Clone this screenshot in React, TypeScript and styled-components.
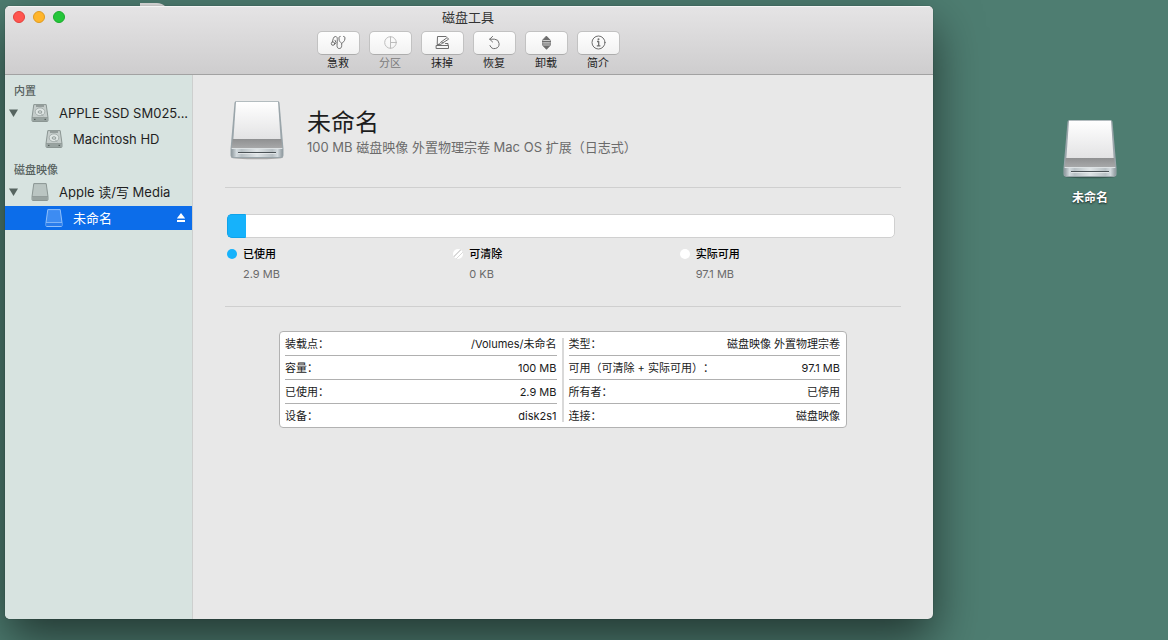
import React from "react";
import styled, { createGlobalStyle, css } from "styled-components";

const GlobalStyle = createGlobalStyle`
  *, *::before, *::after { box-sizing: border-box; }
  body {
    margin: 0;
    font-family: Inter, "Noto Sans CJK SC", sans-serif;
    font-size: 13px;
    color: #1f1f1f;
    background: #4e7d71;
  }
  button {
    margin: 0;
    padding: 0;
    border: 0;
    background: none;
    font: inherit;
    color: inherit;
  }
  svg { display: block; flex: none; }
  h1, h2, p, ul, dl, dd { margin: 0; padding: 0; }
  ul { list-style: none; }
`;

const Desktop = styled.div`
  position: relative;
  display: grid;
  grid-template-columns: minmax(0, 1fr) 235px;
  min-height: 100vh;
  padding: 6px 0 21px 5px;
  background: #4e7d71;
  overflow: hidden;
`;

const BackgroundPaper = styled.div`
  position: absolute;
  top: 3px;
  left: 140px;
  width: 29px;
  height: 12px;
  border-radius: 0 12px 0 0;
  background: #e3e3e3;
`;

const Window = styled.div`
  position: relative;
  display: flex;
  flex-direction: column;
  border-radius: 5px;
  background: #e8e8e8;
  box-shadow: 0 0 1px rgba(0, 0, 0, 0.6), 0 20px 48px rgba(0, 0, 0, 0.56);
  overflow: hidden;
`;

const TitleBar = styled.header`
  display: flex;
  flex-direction: column;
  height: 69px;
  border-top: 1px solid #f4f4f4;
  border-bottom: 1px solid #a2a2a2;
  background: linear-gradient(#e5e4e5, #cecdce);
`;

const TitleRow = styled.div`
  display: grid;
  grid-template-columns: 1fr auto 1fr;
  align-items: center;
  height: 20px;
  padding: 0 10px 0 8px;
`;

const TrafficLights = styled.div`
  display: flex;
  gap: 8px;
`;

const TrafficLight = styled.button<{ $fill: string; $edge: string }>`
  width: 12px;
  height: 12px;
  border: 1px solid ${(p) => p.$edge};
  border-radius: 50%;
  background: ${(p) => p.$fill};
`;

const WindowTitle = styled.h1`
  font-size: 13px;
  font-weight: 400;
  line-height: 18px;
  color: #333;
`;

const Toolbar = styled.div`
  display: flex;
  justify-content: center;
  gap: 9px;
  padding: 4px 2px 0 0;
`;

const ToolItem = styled.button`
  display: flex;
  flex-direction: column;
  align-items: center;
  width: 43px;
  font-size: 11px;
  line-height: 16px;
  color: #222;

  &:disabled { color: #7b7b7b; }
`;

const ToolFace = styled.span<{ $dim?: boolean }>`
  display: grid;
  place-items: center;
  width: 43px;
  height: 24px;
  border: 1px solid #c2c2c2;
  border-bottom-color: #adadad;
  border-radius: 5px;
  background: linear-gradient(#fefefe, #f2f2f2);
  color: ${(p) => (p.$dim ? "#bdbdbd" : "#6e6e6e")};
`;

const WindowBody = styled.div`
  display: grid;
  flex: 1;
  grid-template-columns: 188px minmax(0, 1fr);
`;

const Sidebar = styled.nav`
  display: flex;
  flex-direction: column;
  gap: 10px;
  padding-top: 7px;
  border-right: 1px solid #cdcfce;
  background: #d7e3e0;
`;

const DeviceGroup = styled.section`
  display: grid;
  gap: 1px;
`;

const GroupTitle = styled.h2`
  padding-left: 9px;
  font-size: 11px;
  font-weight: 500;
  line-height: 18px;
  color: #56615e;
`;

const DeviceList = styled.ul`
  display: grid;
  gap: 2px;
`;

const DeviceRow = styled.li<{ $selected?: boolean }>`
  display: flex;
  align-items: center;
  height: 24px;
  padding-right: 6px;
  ${(p) =>
    p.$selected &&
    css`
      background: #0c6dea;
      color: #fff;
    `}
`;

const Disclosure = styled.button`
  display: grid;
  place-items: center;
  width: 17px;
  height: 24px;
`;

const DeviceButton = styled.button<{ $level: number }>`
  display: flex;
  flex: 1;
  align-items: center;
  gap: 10px;
  min-width: 0;
  height: 24px;
  padding-left: ${(p) => (p.$level === 0 ? 9 : 40)}px;
  line-height: 24px;
  text-align: left;
`;

const DeviceName = styled.span`
  white-space: nowrap;
`;

const Main = styled.main`
  padding: 0 32px 32px;
`;

const VolumeHeader = styled.section`
  display: flex;
  align-items: center;
  gap: 23px;
  padding: 25px 5px 27px;
  border-bottom: 1px solid #cfcfcf;
`;

const VolumeText = styled.div`
  padding-top: 3px;
`;

const VolumeTitle = styled.h2`
  font-size: 24px;
  font-weight: 400;
  line-height: 30px;
  color: #1d1d1d;
`;

const VolumeSubtitle = styled.p`
  font-size: 13px;
  line-height: 18px;
  color: #6b6b6b;
`;

const UsageSection = styled.section`
  padding: 26px 0 24px 2px;
  border-bottom: 1px solid #cfcfcf;
`;

const UsageBar = styled.div`
  height: 24px;
  margin-right: 6px;
  border: 1px solid #d0d0d0;
  border-radius: 5px;
  background: #fff;
`;

const UsageFill = styled.div`
  height: 24px;
  margin: -1px 0 0 -1px;
  border: 1px solid #0fa3ea;
  border-right-color: #16b2fb;
  border-radius: 5px 0 0 5px;
  background: #16b2fb;
`;

const Legend = styled.dl`
  display: grid;
  grid-template-columns: repeat(3, 1fr);
  gap: 5px;
  padding-top: 8px;
  font-size: 11px;
  line-height: 16px;
`;

const LegendEntry = styled.div`
  display: grid;
  row-gap: 4px;
`;

const LegendName = styled.dt`
  display: flex;
  align-items: center;
  gap: 6px;
  font-weight: 500;
  color: #000;
`;

const LegendValue = styled.dd`
  padding-left: 16px;
  color: #6b6b6b;
`;

const Dot = styled.span<{ $kind: "used" | "purgeable" | "free" }>`
  width: 10px;
  height: 10px;
  border-radius: 50%;
  background: ${(p) =>
    p.$kind === "used"
      ? "#16b2fb"
      : p.$kind === "free"
      ? "#fff"
      : "linear-gradient(135deg, #fff 38%, #d9d9d9 38% 46%, #fff 46% 62%, #d9d9d9 62% 70%, #fff 70%)"};
`;

const InfoPanel = styled.section`
  display: grid;
  grid-template-columns: 1fr 2px 1fr;
  gap: 5px;
  max-width: 568px;
  margin: 24px auto 0;
  padding: 0 6px 0 5px;
  border: 1px solid #b2b2b2;
  border-radius: 4px;
  background: #fff;
`;

const PanelDivider = styled.div`
  margin: 6px 0 5px;
  background: #d9d9d9;
`;

const InfoTable = styled.table`
  width: 100%;
  border-collapse: collapse;
  font-size: 11px;
  line-height: 16px;
  color: #1a1a1a;
  text-spacing-trim: space-all;

  tr + tr { border-top: 1px solid #b0b0b0; }
  th { padding: 4px 0 3px; font-weight: 400; text-align: left; }
  td { padding: 4px 0 3px; text-align: right; }
`;

const DesktopItems = styled.aside`
  display: flex;
  flex-direction: column;
  align-items: flex-end;
  padding: 113px 42px 0 0;
`;

const DesktopIcon = styled.button`
  display: flex;
  flex-direction: column;
  align-items: center;
  gap: 11px;
  width: 72px;
  font-size: 12px;
  font-weight: 600;
  line-height: 16px;
  color: #fff;
  text-shadow: 0 1px 2px rgba(0, 0, 0, 0.7);
`;

const ToolSvg = ({ children }: { children: React.ReactNode }) => (
  <svg width="17" height="16" viewBox="0 0 17 16" fill="none" stroke="currentColor" strokeLinecap="round" strokeLinejoin="round" aria-hidden="true">
    {children}
  </svg>
);

const FirstAidIcon = () => (
  <ToolSvg>
    <circle cx="3" cy="8.6" r="1.7" />
    <path d="M2.400 6.700C3 4.600 3.400 1.500 5.300 1.500S7.300 3 7.300 4.600L7 10.500c0 2 .8 3 2.300 3s2.400-1 2.400-3V8.600" />
    <path d="M4.700 9.300 6 7.600 5 5.300" />
    <path d="M10.200 1.400c-1.200 0-1.300.8-1.200 2.600.1 2.300 1.300 3.200 2.700 4.300 1.500-1.100 3-2 3.200-4.300.1-1.800 0-2.600-1.300-2.600" />
  </ToolSvg>
);

const PartitionIcon = () => (
  <ToolSvg>
    <circle cx="8.5" cy="7.5" r="5.800" />
    <path d="M8.500 1.700v11.600M8.500 7.500h5.800" />
  </ToolSvg>
);

const EraseIcon = () => (
  <ToolSvg>
    <path d="M12 1.500H3.500L3.200 9.500H5" />
    <path d="M2.500 10.500h12v3h-12z" />
    <path d="M4 9.600c2.500.2 3.600-.3 4.400-1.500L14.600 4.200 13.200 2.500 7.600 6.700C6.300 7.200 6.500 9 4 9.600z" />
    <path d="M7.600 6.700 8.800 8.100M11.500 8.500h2.500v2" />
  </ToolSvg>
);

const RestoreIcon = () => (
  <ToolSvg>
    <path d="M3.700 4.200H8.500a4.700 4.700 0 1 1-4.500 6.400" />
    <path d="M6.600 1.400 3.700 4.200l2.900 2.800" />
  </ToolSvg>
);

const UnmountIcon = () => (
  <ToolSvg>
    <path d="M8.500 1.300 12.300 5.300V10.300L8.500 14.300 4.700 10.300V5.300z" fill="currentColor" fillOpacity="0.300" strokeWidth="0.600" />
    <g fill="currentColor" stroke="none">
      <path d="M8.500 1 12.500 5H4.500zM8.500 14.600 12.500 10.600H4.500z" />
      <path d="M4 6h9v1.200H4zM4 8.400h9v1.200H4z" />
    </g>
  </ToolSvg>
);

const InfoIcon = () => (
  <ToolSvg>
    <circle cx="8.500" cy="7.500" r="6.500" />
    <path d="M7 6.500h1.700v4.200M6.800 10.800h3.600" strokeWidth="1.300" strokeLinecap="butt" />
    <circle cx="8.500" cy="4.200" r="1" fill="currentColor" stroke="none" />
  </ToolSvg>
);

const DriveArt = ({ id }: { id: string }) => (
  <svg width="54" height="60" viewBox="0 0 54 60" aria-hidden="true">
    <defs>
      <linearGradient id={`${id}-face`} x1="0" y1="0" x2="0" y2="1">
        <stop offset="0" stopColor="#ffffff" />
        <stop offset="1" stopColor="#e3e3e4" />
      </linearGradient>
      <linearGradient id={`${id}-base`} x1="0" y1="0" x2="1" y2="0">
        <stop offset="0" stopColor="#8f999e" />
        <stop offset="0.1" stopColor="#d3dade" />
        <stop offset="0.2" stopColor="#b9c1c5" />
        <stop offset="0.5" stopColor="#dfe4e6" />
        <stop offset="0.8" stopColor="#b9c1c5" />
        <stop offset="0.9" stopColor="#d3dade" />
        <stop offset="1" stopColor="#8f999e" />
      </linearGradient>
      <linearGradient id={`${id}-band`} x1="0" y1="0" x2="0" y2="1">
        <stop offset="0" stopColor="#8f9091" />
        <stop offset="1" stopColor="#a8a9aa" />
      </linearGradient>
    </defs>
    <ellipse cx="27" cy="57.500" rx="26" ry="1.800" fill="#000" opacity="0.28" />
    <path d="M6.500 1h41q1.800 0 2 1.800L53.500 49v6q0 3-3 3h-47q-3 0-3-3v-6L4.500 2.800Q4.700 1 6.500 1z" fill="#9aa5aa" />
    <path d="M2.700 39h48.600l1 9.300H1.700z" fill={`url(#${id}-band)`} />
    <path d="M6 1.800h42l2.600 37.200H3.400z" fill={`url(#${id}-face)`} />
    <path d="M1.400 48.200h51.200v6.500q0 2.300-2.300 2.300H3.700q-2.300 0-2.300-2.300z" fill={`url(#${id}-base)`} />
    <path d="M1.600 48.500h50.800" stroke="#dde2e4" />
    <path d="M8 52.500h38" stroke="#4b5256" />
    <path d="M8 53.500h38" stroke="#eef1f2" strokeWidth="0.700" />
  </svg>
);

const SmallDisk = ({ internal, selected }: { internal?: boolean; selected?: boolean }) => {
  const edge = selected ? "#8fbffa" : "#8b9693";
  const face = selected ? "#3d8cf2" : internal ? "#c5cdcb" : "#bac5c2";
  const base = selected ? "#2a7dec" : "#98a3a0";
  return (
    <svg width="18" height="18" viewBox="0 0 18 18" fill="none" aria-hidden="true">
      <path d="M2.800.6h12.400l1.800 13v3q0 .9-.9.900H1.900q-.9 0-.9-.9v-3z" fill={face} stroke={edge} />
      <path d="M1.200 13.700h15.600v3.300H1.200z" fill={base} />
      <path d="M1 13.500h16" stroke={edge} strokeWidth="0.800" />
      {internal && (
        <>
          <ellipse cx="9" cy="7.800" rx="4.800" ry="3.900" fill="#dfe6e4" stroke="#9aa5a2" strokeWidth="0.800" />
          <ellipse cx="9" cy="8" rx="1.900" ry="1.200" stroke="#7d8986" strokeWidth="0.800" />
          <path d="M5 2h8" stroke="#66716e" />
          <path d="M9.800 9.500 12.500 12" stroke="#9aa5a2" strokeWidth="0.800" />
          <path d="M3 15.400h1.500M13.500 15.400H15" stroke="#4f5a57" />
        </>
      )}
    </svg>
  );
};

const DownTriangle = () => (
  <svg width="9" height="8" viewBox="0 0 9 8" aria-hidden="true">
    <path d="M0 .5h9L4.500 8z" fill="#566460" />
  </svg>
);

const EjectIcon = () => (
  <svg width="10" height="10" viewBox="0 0 10 10" fill="#fff" aria-hidden="true">
    <path d="M5 0 9.200 5.500H.8zM1 7h8v2H1z" />
  </svg>
);

const tools = [
  { name: "急救", icon: <FirstAidIcon /> },
  { name: "分区", icon: <PartitionIcon />, disabled: true },
  { name: "抹掉", icon: <EraseIcon /> },
  { name: "恢复", icon: <RestoreIcon /> },
  { name: "卸载", icon: <UnmountIcon /> },
  { name: "简介", icon: <InfoIcon /> },
];

const groups = [
  {
    title: "内置",
    devices: [
      { name: "APPLE SSD SM025...", level: 0, internal: true },
      { name: "Macintosh HD", level: 1, internal: true },
    ],
  },
  {
    title: "磁盘映像",
    devices: [
      { name: "Apple 读/写 Media", level: 0 },
      { name: "未命名", level: 1, selected: true },
    ],
  },
] as { title: string; devices: { name: string; level: number; internal?: boolean; selected?: boolean }[] }[];

const usage = [
  { kind: "used" as const, name: "已使用", value: "2.9 MB" },
  { kind: "purgeable" as const, name: "可清除", value: "0 KB" },
  { kind: "free" as const, name: "实际可用", value: "97.1 MB" },
];

const leftInfo = [
  ["装载点：", "/Volumes/未命名"],
  ["容量：", "100 MB"],
  ["已使用：", "2.9 MB"],
  ["设备：", "disk2s1"],
];

const rightInfo = [
  ["类型：", "磁盘映像 外置物理宗卷"],
  ["可用（可清除 + 实际可用）：", "97.1 MB"],
  ["所有者：", "已停用"],
  ["连接：", "磁盘映像"],
];

const InfoRows = ({ rows }: { rows: string[][] }) => (
  <InfoTable>
    <tbody>
      {rows.map(([label, value]) => (
        <tr key={label}>
          <th scope="row">{label}</th>
          <td>{value}</td>
        </tr>
      ))}
    </tbody>
  </InfoTable>
);

export default function App() {
  const usedPercent = 2.9;
  return (
    <>
      <GlobalStyle />
      <Desktop lang="zh-CN">
        <BackgroundPaper />
        <Window>
          <TitleBar>
            <TitleRow>
              <TrafficLights>
                <TrafficLight $fill="#ff5550" $edge="#e2403c" aria-label="关闭" />
                <TrafficLight $fill="#ffb52b" $edge="#dd9a22" aria-label="最小化" />
                <TrafficLight $fill="#25c63a" $edge="#1aab2c" aria-label="缩放" />
              </TrafficLights>
              <WindowTitle>磁盘工具</WindowTitle>
            </TitleRow>
            <Toolbar>
              {tools.map((tool) => (
                <ToolItem key={tool.name} disabled={tool.disabled}>
                  <ToolFace $dim={tool.disabled}>{tool.icon}</ToolFace>
                  {tool.name}
                </ToolItem>
              ))}
            </Toolbar>
          </TitleBar>
          <WindowBody>
            <Sidebar>
              {groups.map((group) => (
                <DeviceGroup key={group.title}>
                  <GroupTitle>{group.title}</GroupTitle>
                  <DeviceList>
                    {group.devices.map((device) => (
                      <DeviceRow key={device.name} $selected={device.selected}>
                        {device.level === 0 && (
                          <Disclosure aria-label="展开" aria-expanded="true">
                            <DownTriangle />
                          </Disclosure>
                        )}
                        <DeviceButton $level={device.level}>
                          <SmallDisk internal={device.internal} selected={device.selected} />
                          <DeviceName>{device.name}</DeviceName>
                        </DeviceButton>
                        {device.selected && (
                          <button aria-label="推出">
                            <EjectIcon />
                          </button>
                        )}
                      </DeviceRow>
                    ))}
                  </DeviceList>
                </DeviceGroup>
              ))}
            </Sidebar>
            <Main>
              <VolumeHeader>
                <DriveArt id="volume" />
                <VolumeText>
                  <VolumeTitle>未命名</VolumeTitle>
                  <VolumeSubtitle>100 MB 磁盘映像 外置物理宗卷 Mac OS 扩展（日志式）</VolumeSubtitle>
                </VolumeText>
              </VolumeHeader>
              <UsageSection>
                <UsageBar>
                  <UsageFill style={{ width: `${usedPercent}%` }} />
                </UsageBar>
                <Legend>
                  {usage.map((entry) => (
                    <LegendEntry key={entry.kind}>
                      <LegendName>
                        <Dot $kind={entry.kind} />
                        {entry.name}
                      </LegendName>
                      <LegendValue>{entry.value}</LegendValue>
                    </LegendEntry>
                  ))}
                </Legend>
              </UsageSection>
              <InfoPanel>
                <InfoRows rows={leftInfo} />
                <PanelDivider />
                <InfoRows rows={rightInfo} />
              </InfoPanel>
            </Main>
          </WindowBody>
        </Window>
        <DesktopItems>
          <DesktopIcon>
            <DriveArt id="desktop" />
            未命名
          </DesktopIcon>
        </DesktopItems>
      </Desktop>
    </>
  );
}
